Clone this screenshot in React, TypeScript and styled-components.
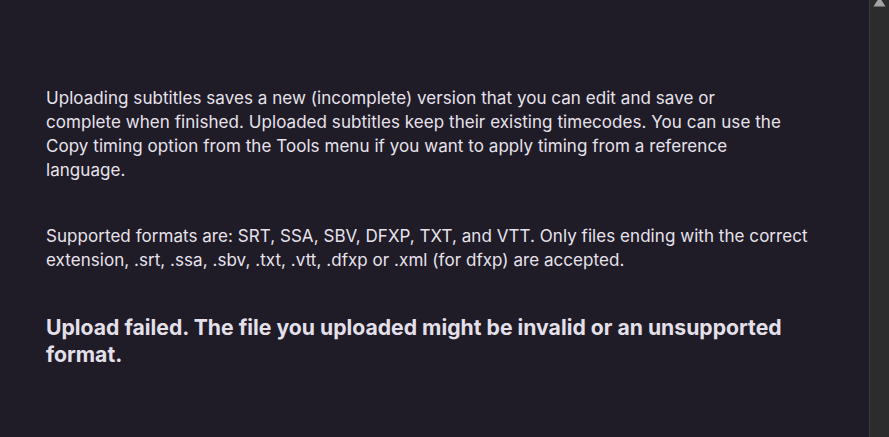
import React from "react";
import styled, { createGlobalStyle } from "styled-components";

const Global = createGlobalStyle`
  html, body { margin: 0; padding: 0; background: #1f1b27; }
  body { font-family: "Inter", "Noto Sans", sans-serif; overflow: hidden; }
`;

const Page = styled.div`
  display: flex;
  height: 437px;
  width: 889px;
  background: #1f1b27;
`;

const Content = styled.main`
  flex: 1;
  padding: 86px 40px 0 46px;
  color: #e7e3ec;
`;

const Para = styled.p`
  margin: 0 0 42px 0;
  font-size: 17px;
  line-height: 24px;
  letter-spacing: 0.05px;
  white-space: nowrap;
`;

const ErrorText = styled.p`
  margin: 0;
  font-size: 21.2px;
  line-height: 27px;
  font-weight: 700;
  color: #e4e0ea;
  white-space: nowrap;
`;

const Scrollbar = styled.div`
  width: 19px;
  flex: 0 0 19px;
  background: #2c2c2c;
  border-left: 1px solid #3a3a3a;
  display: flex;
  justify-content: center;
  align-items: flex-start;
`;

export default function App() {
  return (
    <>
      <Global />
      <Page>
        <Content>
          <Para>
            Uploading subtitles saves a new (incomplete) version that you can edit and save or
            <br />
            complete when finished. Uploaded subtitles keep their existing timecodes. You can use the
            <br />
            Copy timing option from the Tools menu if you want to apply timing from a reference
            <br />
            language.
          </Para>
          <Para>
            Supported formats are: SRT, SSA, SBV, DFXP, TXT, and VTT. Only files ending with the correct
            <br />
            extension, .srt, .ssa, .sbv, .txt, .vtt, .dfxp or .xml (for dfxp) are accepted.
          </Para>
          <ErrorText>
            Upload failed. The file you uploaded might be invalid or an unsupported
            <br />
            format.
          </ErrorText>
        </Content>
        <Scrollbar>
          <svg width="13" height="7" viewBox="0 0 13 7">
            <path d="M6.5 -3 L12.5 6.5 L0.5 6.5 Z" fill="#a3a3a3" />
          </svg>
        </Scrollbar>
      </Page>
    </>
  );
}
